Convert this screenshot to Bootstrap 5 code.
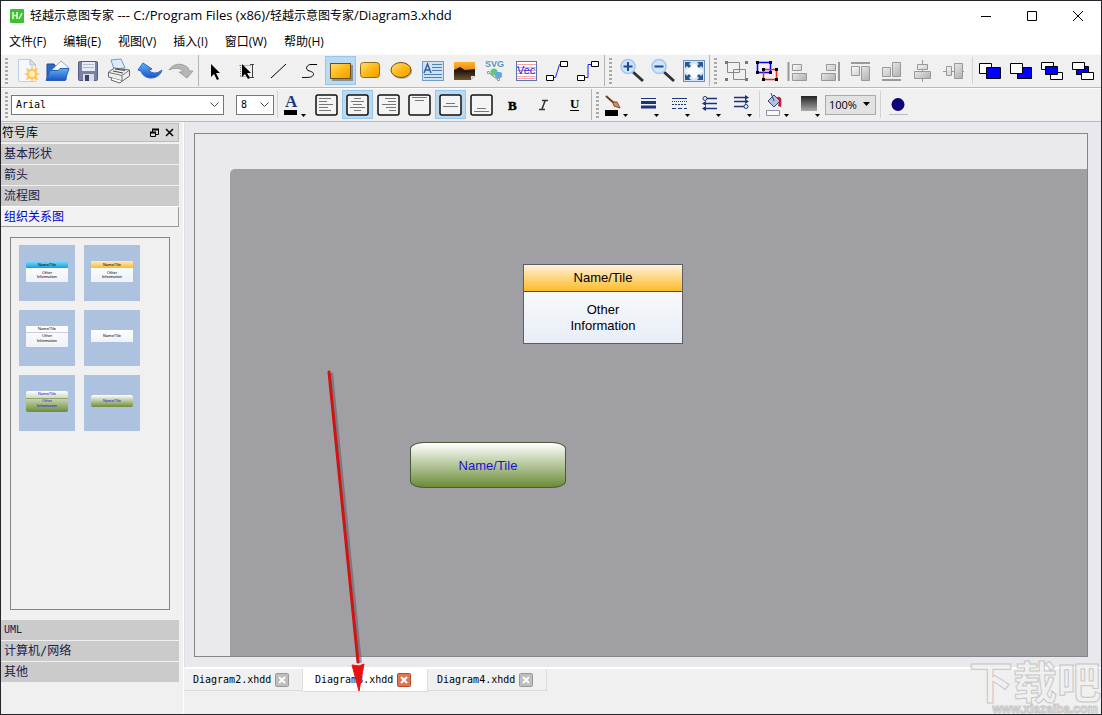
<!DOCTYPE html>
<html lang="zh-CN">
<head>
<meta charset="utf-8">
<meta name="viewport" content="width=device-width, initial-scale=1">
<title>轻越示意图专家</title>
<link href="https://cdn.jsdelivr.net/npm/bootstrap@5.3.0/dist/css/bootstrap.min.css" rel="stylesheet">
<style>
  body { font-family: "Open Sans", "Noto Sans CJK SC", sans-serif; font-size: 12px; line-height: 16px; color: #000; background: #f0f0f0; }
  .app-window { border: 1px solid #25252b; background: #f0f0f0; }
  .title-bar { height: 29px; background: #fff; padding-left: 9px; }
  .title-bar button, .menu-strip a, .tool, .acc-item, .dock-head button, .tab-close { border: 0; background: none; padding: 0; color: inherit; text-decoration: none; }
  .title-bar button { width: 46px; height: 29px; }
  .app-mark { margin-right: 6px; }
  .win-path { font-size: 13px; }
  .menu-strip { height: 24px; background: #fff; padding: 0 8px; gap: 17px; }
  .tool-row { height: 34px; border-top: 1px solid #fbfbfb; border-bottom: 1px solid #b9b9b9; background: #f0f0f0; padding-bottom: 1px; }
  .tool { width: 31px; height: 29px; flex: none; }
  .tool.active { background: #bcd9f2; box-shadow: inset 0 0 0 1px #97c6ec; }
  .tool svg { display: block; width: 31px; height: 29px; }
  .rule { width: 1px; flex: none; align-self: stretch; background: #b4b4b4; }
  .rule-gap { margin-right: 2px; }
  .rule-lead { margin-left: 1px; }
  .rule-soft { background: #d2d2d2; margin: 2px 2px 2px 3px; }
  .rule-near { margin: 2px 1px; }
  .grip { width: 3px; height: 26px; flex: none; margin: 0 4px; background: repeating-linear-gradient(#aaa 0 2px, transparent 2px 4px); }
  .grip-field { margin-right: 3px; }
  .mono-text { font-family: "DejaVu Sans Mono", "Noto Sans CJK SC", monospace; font-size: 10px; }
  .field { height: 20px; flex: none; border: 1px solid #767676; border-radius: 0; background-color: #fff; padding: 0 16px 0 4px; line-height: 18px; appearance: none; color: #000; background-repeat: no-repeat; background-position: right 4px center; background-image: url("data:image/svg+xml,%3Csvg xmlns='http://www.w3.org/2000/svg' width='9' height='6'%3E%3Cpath d='M.5 .5l4 4 4-4' fill='none' stroke='%23444'/%3E%3C/svg%3E"); }
  .field-font { width: 213px; margin-right: 12px; }
  .field-size { width: 38px; }
  .field-zoom { width: 51px; margin: 0 1px 0 2px; padding-left: 3px; background-color: #e2e2e2; border-color: #aaa; font-family: "Open Sans", sans-serif; font-size: 11px; background-image: url("data:image/svg+xml,%3Csvg xmlns='http://www.w3.org/2000/svg' width='9' height='5'%3E%3Cpath d='M1 0h7L4.500 4z'/%3E%3C/svg%3E"); }
  .dock { width: 178px; flex: none; font-family: "DejaVu Sans Mono", "Noto Sans CJK SC", sans-serif; padding: 1px 0 31px; }
  .dock-head { height: 19px; background: #d8d8d8; border: 1px solid #bcbcbc; border-left: 0; margin-bottom: 2px; padding: 0 2px 0 1px; }
  .acc-item { height: 20px; flex: none; margin-bottom: 1px; padding-left: 3px; text-align: left; background: #cbcbcb; color: #20204a; }
  .acc-item.open { background: #f2f2f2; color: #0000d0; border: 1px solid #999; border-width: 0 1px 1px 0; box-shadow: 0 -1px #fff; }
  .latin { font-size: 10px; }
  .shape-box { margin: 9px 9px 10px 9px; border: 1px solid #858585; padding: 7px 8px; }
  .shape-grid { display: grid; grid-template-columns: 56px 56px; gap: 9px; }
  .shape-thumb { height: 56px; border: 0; padding: 0; background: #adc2df; }
  .shape-thumb svg { display: block; }
  .work { border-left: 1px solid #fff; margin-left: 4px; min-width: 0; }
  .view { background: #e9e8ed; border-left: 1px solid #e0e0e6; border-bottom: 2px solid #fff; padding: 11px 13px 10px 9px; }
  .frame { border: 1px solid #85858a; padding: 35px 0 0 35px; background: #eae9ee; }
  .sheet { background: #a09fa4; border-top-left-radius: 5px; }
  .node { position: absolute; font-family: "Liberation Sans", sans-serif; font-size: 13px; line-height: 16px; text-align: center; }
  .node-card { left: 293px; top: 95px; width: 160px; height: 80px; border: 1px solid #5e5e62; background: linear-gradient(#fff, #e8edf6); }
  .node-head { height: 27px; border-bottom: 1px solid #5b4a20; background: linear-gradient(#fff1da, #fdbb27); padding-top: 5px; }
  .node-body { padding-top: 10px; }
  .node-pill { left: 180px; top: 273px; width: 156px; height: 46px; border: 1px solid #4b5a38; border-radius: 14px / 7px; background: linear-gradient(#fff, #6c8c37); color: #1a10d8; padding-top: 15px; }
  .arrow-mark { position: absolute; left: 318px; top: 240px; pointer-events: none; }
  .tab-strip { height: 45px; }
  .doc-tab { height: 22px; border-right: 1px solid #ddd; border-bottom: 1px solid #dadada; padding: 0 12px 0 9px; gap: 4px; background: #f0f0f0; width: 119px; }
  .doc-tab.current { background: #fff; height: 23px; width: 125px; padding-left: 12px; }
  .doc-tab a { color: #000; text-decoration: none; white-space: nowrap; }
  .tab-close svg { display: block; }
  .watermark { position: absolute; right: 0; bottom: 0; width: 134px; color: #f1f1f1; opacity: .8; text-align: right; pointer-events: none; font-family: "Noto Sans CJK SC", sans-serif; font-weight: 700; -webkit-text-stroke: 1px #bdbdbd; }
  .wm-name { font-size: 44px; line-height: 44px; margin-bottom: 3px; }
  .wm-site { font-family: "Liberation Sans", sans-serif; font-size: 12px; line-height: 9px; padding-right: 3px; }
</style>
</head>
<body>
<svg width="0" height="0" class="position-absolute" aria-hidden="true">
  <defs>
    <linearGradient id="gold" x1="0" y1="0" x2="1" y2="1"><stop stop-color="#ffe07a"/><stop offset=".5" stop-color="#ffba18"/><stop offset="1" stop-color="#f29a00"/></linearGradient>
    <linearGradient id="blue" x1="0" y1="0" x2="0" y2="1"><stop stop-color="#5cb4f5"/><stop offset="1" stop-color="#1c52c4"/></linearGradient>
    <linearGradient id="grey" x1="0" y1="0" x2="1" y2="1"><stop stop-color="#fafafa"/><stop offset="1" stop-color="#b0b0b0"/></linearGradient>
    <linearGradient id="dark" x1="0" y1="0" x2="0" y2="1"><stop stop-color="#222"/><stop offset="1" stop-color="#aaa"/></linearGradient>
    <linearGradient id="tBlue" x1="0" y1="0" x2="0" y2="1"><stop stop-color="#7fdcff"/><stop offset="1" stop-color="#14a0dd"/></linearGradient>
    <linearGradient id="tGold" x1="0" y1="0" x2="0" y2="1"><stop stop-color="#ffeac0"/><stop offset="1" stop-color="#fcb92c"/></linearGradient>
    <linearGradient id="tWhite" x1="0" y1="0" x2="0" y2="1"><stop stop-color="#fff"/><stop offset="1" stop-color="#eef1f8"/></linearGradient>
    <linearGradient id="tGreen" x1="0" y1="0" x2="0" y2="1"><stop stop-color="#fff"/><stop offset="1" stop-color="#6c8c37"/></linearGradient>
    <linearGradient id="sunset" x1="0" y1="0" x2="0" y2="1"><stop stop-color="#ffb52c"/><stop offset=".45" stop-color="#e88a10"/><stop offset=".5" stop-color="#241608"/><stop offset="1" stop-color="#6b5535"/></linearGradient>
  </defs>
</svg>
<div class="app-window d-flex flex-column vh-100 position-relative overflow-hidden">
  <header class="title-bar d-flex align-items-center flex-shrink-0">
    <svg width="14" height="14" viewBox="0 0 14 14" class="app-mark flex-shrink-0" aria-hidden="true"><rect width="14" height="14" rx="1" fill="#3fbf35"/><path d="M3 3v7M3 6.500h4M7 3v7M9 10l3-6" stroke="#e6ffd8" stroke-width="1.500" fill="none"/></svg>
    <span class="text-nowrap me-auto">轻越示意图专家<span class="win-path"> --- C:/Program Files (x86)/</span>轻越示意图专家<span class="win-path">/Diagram3.xhdd</span></span>
    <button type="button" aria-label="最小化"><svg width="12" height="12"><path d="M1 6.500h10" stroke="#000"/></svg></button>
    <button type="button" aria-label="最大化"><svg width="12" height="12"><path d="M1.500 1.500h9v9h-9z" fill="none" stroke="#000"/></svg></button>
    <button type="button" aria-label="关闭"><svg width="12" height="12"><path d="M1 1l10 10M11 1L1 11" stroke="#000"/></svg></button>
  </header>
  <nav class="menu-strip d-flex align-items-center flex-shrink-0 text-nowrap">
    <a href="#">文件(F)</a><a href="#">编辑(E)</a><a href="#">视图(V)</a><a href="#">插入(I)</a><a href="#">窗口(W)</a><a href="#">帮助(H)</a>
  </nav>

  <div class="tool-row d-flex align-items-center flex-shrink-0" role="toolbar" aria-label="标准工具栏">
    <span class="grip"></span>
    <button class="tool" aria-label="新建"><svg><path d="M6.500 3.500h12l5 5v17h-17z" fill="#f6f8fd" stroke="#c3cde2"/><path d="M18 3.500l5.500 5.500h-5.500z" fill="#dce4f5" stroke="#b0bedb"/><path d="M20 9l1.500 4.500L26 12l-1.500 4.500L28 18l-3.500 1.500L26 24l-4.500-1.500L20 26l-1.500-3.500L14 24l1.500-4.500L12 18l3.500-1.500L14 12l4.500 1.500z" fill="#ffbe48" fill-opacity=".85"/><circle cx="20" cy="18" r="3" fill="#fff3b5"/></svg></button>
    <button class="tool" aria-label="打开"><svg><path d="M4 24V8h7l2 3h10v13z" fill="#2e6bc4" stroke="#1c4a9d"/><path d="M9 14l9-9 7 6-3 8z" fill="#f6f9ff" stroke="#8da5cc"/><path d="M3 24.500l4-10h8l2-2h9l-4 12z" fill="url(#blue)" stroke="#2a5eb8"/></svg></button>
    <button class="tool" aria-label="保存"><svg><rect x="4.500" y="5.500" width="19" height="19" rx="1" fill="#7a80a4" stroke="#565c84"/><rect x="8" y="6" width="13" height="9" fill="#e8eaf4"/><path d="M9 8.500h11M9 11.500h11" stroke="#b5bad0"/><rect x="9" y="18" width="11" height="7" fill="#d9dbe8"/><rect x="11" y="19" width="4" height="6" fill="#3d426b"/></svg></button>
    <button class="tool" aria-label="打印"><svg><path d="M9 13L6 4l10-1 4 9z" fill="#d9ebfd" stroke="#779ac4"/><path d="M3.500 16l6-4 15 2v6l-7 5-14-4z" fill="#eee" stroke="#666"/><path d="M4 16.500l13 3 7-5M17 20v5" fill="none" stroke="#777"/><path d="M7 22l-1 2 9 3 2-2" fill="#fff" stroke="#666"/><path d="M8 15l10 2M10 13l10 1.500" stroke="#444"/></svg></button>
    <button class="tool" aria-label="撤销"><svg><path d="M7 7L2 14l3 1c1 4 5 7 10 7 6 0 10-4 11-8-5 4-10 4-13 0l3-1z" fill="url(#blue)" stroke="#2c64cf"/></svg></button>
    <button class="tool" aria-label="重做"><svg><path d="M2 14c3-5 9-7 14-5 4 1 6 3 6 6h4l-6 7-8-6h4c-1-4-8-5-14-2z" fill="#b4b6b8" stroke="#9c9ea0"/></svg></button>
    <span class="rule rule-gap"></span>
    <button class="tool" aria-label="选择"><svg><path d="M10 8v13l3-3 3 6 2-1-3-6h4z"/></svg></button>
    <button class="tool" aria-label="选择文本"><svg><path d="M7.500 9.500h12M8.500 20.500h10M8.500 9v12" fill="none" stroke="#777" stroke-dasharray="1 1"/><path d="M10 8v13l3-3 3 5 2-1-3-5h4z"/><path d="M18 8.500h4M20.500 9v12M18 21.500h4" stroke="#444"/></svg></button>
    <button class="tool" aria-label="直线"><svg><path d="M8 22L23 8" stroke="#000"/></svg></button>
    <button class="tool" aria-label="曲线"><svg><path d="M23 8.500h-6c-4 0-6 4-3 6 3 1 7 2 5 5-1 2-5 2-11 2" fill="none" stroke="#000"/></svg></button>
    <button class="tool active" aria-label="矩形" aria-pressed="true"><svg><path d="M7 24h20V9" fill="none" stroke="#82919a" stroke-width="2"/><rect x="5.500" y="7.500" width="20" height="15" fill="url(#gold)" stroke="#6d5010"/></svg></button>
    <button class="tool" aria-label="圆角矩形"><svg><rect x="4.500" y="6.500" width="19" height="15" rx="3" fill="url(#gold)" stroke="#8d6a1c"/></svg></button>
    <button class="tool" aria-label="椭圆"><svg><ellipse cx="15" cy="15.500" rx="10" ry="7.500" fill="#b9b9b0"/><ellipse cx="14" cy="14" rx="10" ry="7.500" fill="url(#gold)" stroke="#6d5010"/></svg></button>
    <button class="tool" aria-label="文本框"><svg><rect x="4.500" y="5.500" width="21" height="19" fill="#cfe1f3" stroke="#6f9bc8"/><path d="M14 8.500h10M14 11.500h10M14 14.500h10M6 18.500h18M6 21.500h18" stroke="#4f80b4"/><path d="M6 17l3.500-9 3.500 9M7.500 14h4" fill="none" stroke="#335f96" stroke-width="1.500"/></svg></button>
    <button class="tool" aria-label="图片"><svg><path d="M5 6h21v14l-4 4H5z" fill="url(#sunset)"/><path d="M5 14l6-3 5 3 10-1v3H5z" fill="#2a1704"/><path d="M22 24v-4h4z" fill="#ddd"/></svg></button>
    <button class="tool" aria-label="SVG"><svg><text x="5" y="11" font-family="Liberation Sans" font-size="9" font-weight="700" fill="#5799b5">SVG</text><circle cx="14" cy="16" r="3.500" fill="#61c584"/><rect x="15" y="16" width="7" height="6" rx="2" fill="#5fa8ea"/><path d="M9 17l9 7" stroke="#888"/><path d="M7.500 15.500h2v2h-2zM17.500 22.500h2v2h-2z" fill="#fff" stroke="#999"/></svg></button>
    <button class="tool" aria-label="矢量图"><svg><rect x="5.500" y="5.500" width="20" height="19" fill="#fff" stroke="#5975ad"/><path d="M6 8.500h19M6 11.500h19M6 14.500h19M6 17.500h19M6 20.500h19M6 22.500h19" stroke="#f0a4b4"/><text x="6" y="18" font-family="Liberation Sans" font-size="11" fill="#2020e0">Vec</text></svg></button>
    <button class="tool" aria-label="连接线"><svg><path d="M11.500 21.500h2l4-13h2" fill="none" stroke="#2020e0"/><path d="M4.500 19.500h7v5h-7zM18.500 5.500h7v5h-7z" fill="#fff" stroke="#000"/></svg></button>
    <button class="tool" aria-label="折线连接"><svg><path d="M12 21.500h3v-13h4" fill="none" stroke="#2020e0"/><path d="M4.500 19.500h7v5h-7zM18.500 5.500h7v5h-7z" fill="#fff" stroke="#000"/></svg></button>
    <span class="rule"></span>
    <span class="grip"></span>
    <button class="tool" aria-label="放大"><svg><path d="M17 16l10 9" stroke="#333" stroke-width="3"/><circle cx="12" cy="10.500" r="7" fill="#cfe5fb" stroke="#a3c6ec" stroke-width="1.500"/><path d="M12 6v9M7.500 10.500h9" stroke="#1c46a0" stroke-width="2"/></svg></button>
    <button class="tool" aria-label="缩小"><svg><path d="M17 16l10 9" stroke="#333" stroke-width="3"/><circle cx="12" cy="10.500" r="7" fill="#cfe5fb" stroke="#a3c6ec" stroke-width="1.500"/><path d="M7.500 10.500h9" stroke="#1c46a0" stroke-width="2"/></svg></button>
    <button class="tool" aria-label="适应窗口"><svg><rect x="5.500" y="4.500" width="21" height="21" fill="#d3e3f6" stroke="#6d8fbd"/><path d="M16 7l9 8-9 8-9-8z" fill="#fafdff"/><path d="M7 6h6l-2 2 2 2-2 2-2-2-2 2zM25 6h-6l2 2-2 2 2 2 2-2 2 2zM7 24h6l-2-2 2-2-2-2-2 2-2-2zM25 24h-6l2-2-2-2 2-2 2 2 2-2z" fill="#2b568f"/></svg></button>
    <span class="rule"></span>
    <span class="grip"></span>
    <button class="tool" aria-label="组合"><svg><path d="M6.500 6.500h12v10h-12zM12.500 13.500h12v10h-12z" fill="none" stroke="#888"/><path d="M4 5h3v3H4zM24 5h3v3h-3zM4 22h3v3H4zM24 22h3v3h-3z" fill="#777"/></svg></button>
    <button class="tool" aria-label="取消组合"><svg><path d="M5.500 6.500h13v10h-13z" fill="none" stroke="#00f" stroke-width="1.500"/><path d="M11.500 13.500h13v10h-13z" fill="none" stroke="#f22" stroke-width="1.500"/><path d="M4 5h3v3H4zM17 5h3v3h-3zM4 15h3v3H4zM17 15h3v3h-3zM10 12h3v3h-3zM23 12h3v3h-3zM10 22h3v3h-3zM23 22h3v3h-3z"/></svg></button>
    <button class="tool" aria-label="左对齐"><svg fill="url(#grey)" stroke="#999"><path d="M5.500 6v19" stroke-width="2"/><path d="M9.500 8.500h9v6h-9zM9.500 17.500h14v7h-14z"/></svg></button>
    <button class="tool" aria-label="右对齐"><svg fill="url(#grey)" stroke="#999"><path d="M25 6v19" stroke-width="2"/><path d="M12.500 8.500h9v6h-9zM7.500 17.500h14v7h-14z"/></svg></button>
    <button class="tool" aria-label="顶端对齐"><svg fill="url(#grey)" stroke="#999"><path d="M6 7h19" stroke-width="2"/><path d="M6.500 10.500h8v9h-8zM16.500 10.500h8v14h-8z"/></svg></button>
    <button class="tool" aria-label="底端对齐"><svg fill="url(#grey)" stroke="#999"><path d="M6 24h19" stroke-width="2"/><path d="M6.500 11.500h8v9h-8zM16.500 6.500h8v14h-8z"/></svg></button>
    <button class="tool" aria-label="水平居中"><svg fill="url(#grey)" stroke="#999"><path d="M15.500 4v22"/><path d="M10.500 8.500h10v5h-10zM7.500 15.500h16v7h-16z"/></svg></button>
    <button class="tool" aria-label="垂直居中"><svg fill="url(#grey)" stroke="#999"><path d="M5 15.500h21"/><path d="M8.500 10.500h5v9h-5zM16.500 7.500h8v15h-8z"/></svg></button>
    <span class="rule rule-soft"></span>
    <button class="tool" aria-label="置于顶层"><svg stroke="#000"><path d="M4.500 7.500h12v10h-12z" fill="#fff"/><path d="M11.500 11.500h14v11h-14z" fill="#00f"/></svg></button>
    <button class="tool" aria-label="置于底层"><svg stroke="#000"><path d="M11.500 11.500h14v11h-14z" fill="#00f"/><path d="M4.500 7.500h12v10h-12z" fill="#fff"/></svg></button>
    <button class="tool" aria-label="上移一层"><svg stroke="#000"><path d="M4.500 6.500h12v7h-12zM13.500 16.500h12v7h-12z" fill="#fff"/><path d="M8.500 10.500h12v8h-12z" fill="#00f"/></svg></button>
    <button class="tool" aria-label="下移一层"><svg stroke="#000"><path d="M8.500 10.500h12v8h-12z" fill="#00f"/><path d="M4.500 6.500h12v7h-12zM13.500 16.500h12v7h-12z" fill="#fff"/></svg></button>
  </div>

  <div class="tool-row d-flex align-items-center flex-shrink-0" role="toolbar" aria-label="格式工具栏">
    <span class="grip grip-field"></span>
    <select class="field field-font mono-text" aria-label="字体"><option>Arial</option></select>
    <select class="field field-size mono-text" aria-label="字号"><option>8</option></select>
    <span class="rule rule-soft"></span>
    <button class="tool" aria-label="字体颜色"><svg><text x="5" y="17" font-family="Liberation Serif" font-size="17" font-weight="700" fill="#1c3a80">A</text><path d="M4 20h13v5H4z"/><path d="M21 24h5l-2.500 3z"/></svg></button>
    <button class="tool" aria-label="文本左对齐"><svg><rect x="5" y="5" width="21" height="20" rx="2" fill="#f4f4f4" stroke="#111" stroke-width="1.500"/><path d="M8 8.500h12M8 11.500h8M8 14.500h14M8 17.500h9M8 20.500h12" stroke="#777"/></svg></button>
    <button class="tool active" aria-label="文本居中" aria-pressed="true"><svg><rect x="5" y="5" width="21" height="20" rx="2" fill="#f4f4f4" stroke="#111" stroke-width="1.500"/><path d="M12 8.500h7M9 11.500h13M11 14.500h9M8 17.500h15M12 20.500h7" stroke="#777"/></svg></button>
    <button class="tool" aria-label="文本右对齐"><svg><rect x="5" y="5" width="21" height="20" rx="2" fill="#f4f4f4" stroke="#111" stroke-width="1.500"/><path d="M12 8.500h11M15 11.500h8M9 14.500h14M13 17.500h10M16 20.500h7" stroke="#777"/></svg></button>
    <button class="tool" aria-label="文本靠上"><svg><rect x="5" y="5" width="21" height="20" rx="2" fill="#f4f4f4" stroke="#111" stroke-width="1.500"/><path d="M8 7.500h15M11 10.500h9" stroke="#777"/></svg></button>
    <button class="tool active" aria-label="文本垂直居中" aria-pressed="true"><svg><rect x="5" y="5" width="21" height="20" rx="2" fill="#f4f4f4" stroke="#111" stroke-width="1.500"/><path d="M11 13.500h9M8 16.500h15" stroke="#777"/></svg></button>
    <button class="tool" aria-label="文本靠下"><svg><rect x="5" y="5" width="21" height="20" rx="2" fill="#f4f4f4" stroke="#111" stroke-width="1.500"/><path d="M11 18.500h9M8 21.500h15" stroke="#777"/></svg></button>
    <button class="tool" aria-label="粗体"><svg><text x="11" y="20" font-family="Liberation Serif" font-size="13" font-weight="700" stroke="#000" stroke-width=".5">B</text></svg></button>
    <button class="tool" aria-label="斜体"><svg><path d="M14 10.500h6M11 19.500h6M17 11l-3 8" stroke="#333" stroke-width="1.500"/></svg></button>
    <button class="tool" aria-label="下划线"><svg><text x="11" y="18" font-family="Liberation Serif" font-size="13" font-weight="700">U</text><path d="M11 20.500h9" stroke="#000"/></svg></button>
    <span class="rule rule-lead"></span>
    <span class="grip"></span>
    <button class="tool" aria-label="线条颜色"><svg><path d="M3 6l9 8" stroke="#733c18" stroke-width="2"/><path d="M10 12l4 0 3 6-6-2z" fill="#d89061" stroke="#8a4a22"/><path d="M2 20h13v6H2z"/><path d="M20 24h5l-2.500 3z"/></svg></button>
    <button class="tool" aria-label="线宽"><svg><path d="M7 8.500h15" stroke="#1c3478"/><path d="M7 12.500h15M7 17h15" stroke="#1c3478" stroke-width="3"/><path d="M20 24h5l-2.500 3z"/></svg></button>
    <button class="tool" aria-label="线型"><svg stroke="#1c3478"><path d="M7 8.500h15"/><path d="M7 11.500h15" stroke-dasharray="1 1"/><path d="M7 14.500h15" stroke-dasharray="2 1"/><path d="M7 18.500h15" stroke-dasharray="4 2"/><path d="M20 24h5l-2.500 3z" fill="#000" stroke="none"/></svg></button>
    <button class="tool" aria-label="起点箭头"><svg fill="#f0f0f0" stroke="#1c3478"><path d="M9 8.500h12M8 13.500h13M8 18.500h13" stroke-width="1.500"/><circle cx="9" cy="8.500" r="2"/><path d="M10 11l-4 2.500 4 2.500zM10 16l-4 2.500 4 2.500z" fill="#1c3478" stroke="none"/><path d="M20 24h5l-2.500 3z" fill="#000" stroke="none"/></svg></button>
    <button class="tool" aria-label="终点箭头"><svg fill="#f0f0f0" stroke="#1c3478"><path d="M7 7.500h12M7 11.500h12M7 16.500h12" stroke-width="1.500"/><circle cx="19" cy="16.500" r="2"/><path d="M18 5l4 2.500-4 2.500zM18 9l4 2.500-4 2.500z" fill="#1c3478" stroke="none"/><path d="M20 24h5l-2.500 3z" fill="#000" stroke="none"/></svg></button>
    <span class="rule rule-soft rule-near"></span>
    <button class="tool" aria-label="填充颜色"><svg><path d="M7 11l6-6 6 6-6 6z" fill="#b4bfe0" stroke="#35427d"/><path d="M10 3l3 8" stroke="#35427d"/><path d="M16 7c5-1 5 3 4 10l-3-1 1-5z" fill="#c61c38"/><path d="M5.500 20.500h13v5h-13z" fill="#f8f8f8" stroke="#8791ab"/><path d="M23 24h5l-2.500 3z"/></svg></button>
    <button class="tool" aria-label="渐变"><svg><path d="M9 6h16v15H9z" fill="url(#dark)"/><path d="M23 24h5l-2.500 3z"/></svg></button>
    <select class="field field-zoom" aria-label="缩放比例"><option>100%</option></select>
    <span class="rule rule-soft"></span>
    <button class="tool" aria-label="圆形"><svg><circle cx="15" cy="14.500" r="6.500" fill="#100078"/><path d="M6 24.500h19" stroke="#bcbcbc"/></svg></button>
  </div>

  <div class="d-flex flex-grow-1 position-relative" style="min-height:0">
    <aside class="dock d-flex flex-column">
      <div class="dock-head d-flex align-items-center flex-shrink-0 gap-1">
        <span class="me-auto">符号库</span>
        <button type="button" aria-label="浮动" class="d-flex"><svg width="12" height="12"><path d="M4.500 5V2.500h6v5H8M2.500 5.500h5v4h-5z" fill="none" stroke="#000"/><path d="M4 2.500h7M2 5.500h6" stroke="#000" stroke-width="2"/></svg></button>
        <button type="button" aria-label="关闭" class="d-flex"><svg width="12" height="12"><path d="M2 2l7 7M9 2L2 9" stroke="#000" stroke-width="1.500"/></svg></button>
      </div>
      <button class="acc-item">基本形状</button>
      <button class="acc-item">箭头</button>
      <button class="acc-item">流程图</button>
      <button class="acc-item open" aria-expanded="true">组织关系图</button>
      <div class="shape-box flex-grow-1 overflow-hidden">
        <div class="shape-grid">
          <button class="shape-thumb" aria-label="蓝色卡片"><svg width="56" height="56" font-family="Liberation Sans" font-size="4" text-anchor="middle"><rect x="7" y="16" width="42" height="21" fill="url(#tWhite)"/><rect x="7" y="16" width="42" height="7" fill="url(#tBlue)"/><text x="28" y="21">Name/Tile</text><text x="28" y="29">Other</text><text x="28" y="33">Information</text></svg></button>
          <button class="shape-thumb" aria-label="橙色卡片"><svg width="56" height="56" font-family="Liberation Sans" font-size="4" text-anchor="middle"><rect x="7" y="16" width="42" height="21" fill="url(#tWhite)"/><rect x="7" y="16" width="42" height="7" fill="url(#tGold)"/><text x="28" y="21">Name/Tile</text><text x="28" y="29">Other</text><text x="28" y="33">Information</text></svg></button>
          <button class="shape-thumb" aria-label="白色卡片"><svg width="56" height="56" font-family="Liberation Sans" font-size="4" text-anchor="middle"><rect x="7" y="16" width="42" height="21" fill="url(#tWhite)"/><path d="M7 22.500h42" stroke="#ccd0dc"/><text x="28" y="20">Name/Tile</text><text x="28" y="27">Other</text><text x="28" y="32">Information</text></svg></button>
          <button class="shape-thumb" aria-label="白色矩形"><svg width="56" height="56" font-family="Liberation Sans" font-size="4" text-anchor="middle"><rect x="7" y="20" width="42" height="12" fill="url(#tWhite)"/><text x="28" y="27">Name/Tile</text></svg></button>
          <button class="shape-thumb" aria-label="绿色卡片"><svg width="56" height="56" font-family="Liberation Sans" font-size="4" text-anchor="middle" fill="#1a10d8"><rect x="7" y="16" width="42" height="21" rx="2" fill="url(#tGreen)"/><path d="M7 23.500h42" stroke="#8fa56c"/><text x="28" y="20">Name/Tile</text><text x="28" y="27">Other</text><text x="28" y="32">Information</text></svg></button>
          <button class="shape-thumb" aria-label="绿色圆角矩形"><svg width="56" height="56" font-family="Liberation Sans" font-size="4" text-anchor="middle" fill="#1a10d8"><rect x="7" y="20" width="42" height="12" rx="2" fill="url(#tGreen)"/><text x="28" y="27">Name/Tile</text></svg></button>
        </div>
      </div>
      <button class="acc-item latin">UML</button>
      <button class="acc-item">计算机/网络</button>
      <button class="acc-item">其他</button>
    </aside>
    <main class="work d-flex flex-column flex-grow-1">
      <div class="view d-flex flex-grow-1">
        <div class="frame d-flex flex-grow-1">
          <div class="sheet flex-grow-1 position-relative overflow-hidden">
            <div class="node node-card"><div class="node-head">Name/Tile</div><div class="node-body">Other<br>Information</div></div>
            <div class="node node-pill">Name/Tile</div>
          </div>
        </div>
      </div>
      <div class="tab-strip mono-text d-flex flex-shrink-0 align-items-start">
        <div class="doc-tab d-flex align-items-center"><a href="#">Diagram2.xhdd</a><button class="tab-close" aria-label="关闭 Diagram2"><svg width="14" height="14"><rect x=".5" y=".5" width="13" height="13" rx="1" fill="#bebebe" stroke="#999"/><path d="M4 4l6 6M10 4l-6 6" stroke="#fff" stroke-width="2"/></svg></button></div>
        <div class="doc-tab current d-flex align-items-center"><a href="#">Diagram3.xhdd</a><button class="tab-close" aria-label="关闭 Diagram3"><svg width="14" height="14"><rect x=".5" y=".5" width="13" height="13" rx="1" fill="#de7556" stroke="#b84a2c"/><path d="M4 4l6 6M10 4l-6 6" stroke="#fff" stroke-width="2"/></svg></button></div>
        <div class="doc-tab d-flex align-items-center"><a href="#">Diagram4.xhdd</a><button class="tab-close" aria-label="关闭 Diagram4"><svg width="14" height="14"><rect x=".5" y=".5" width="13" height="13" rx="1" fill="#bebebe" stroke="#999"/><path d="M4 4l6 6M10 4l-6 6" stroke="#fff" stroke-width="2"/></svg></button></div>
      </div>
    </main>
    <svg class="arrow-mark" width="60" height="335" aria-hidden="true"><path d="M12 11l29 290" stroke="#55555b" stroke-opacity=".5" stroke-width="4"/><path d="M10 10l29 290" stroke="#d01414" stroke-width="3" stroke-linecap="round"/><path d="M33 303l7 1 5-2-5 27z" fill="#e81212" stroke="#e81212"/></svg>
  </div>
  <div class="watermark"><div class="wm-name">下载吧</div><div class="wm-site">www.xiazaiba.com</div></div>
</div>
<script src="https://cdn.jsdelivr.net/npm/bootstrap@5.3.0/dist/js/bootstrap.bundle.min.js"></script>
</body>
</html>
